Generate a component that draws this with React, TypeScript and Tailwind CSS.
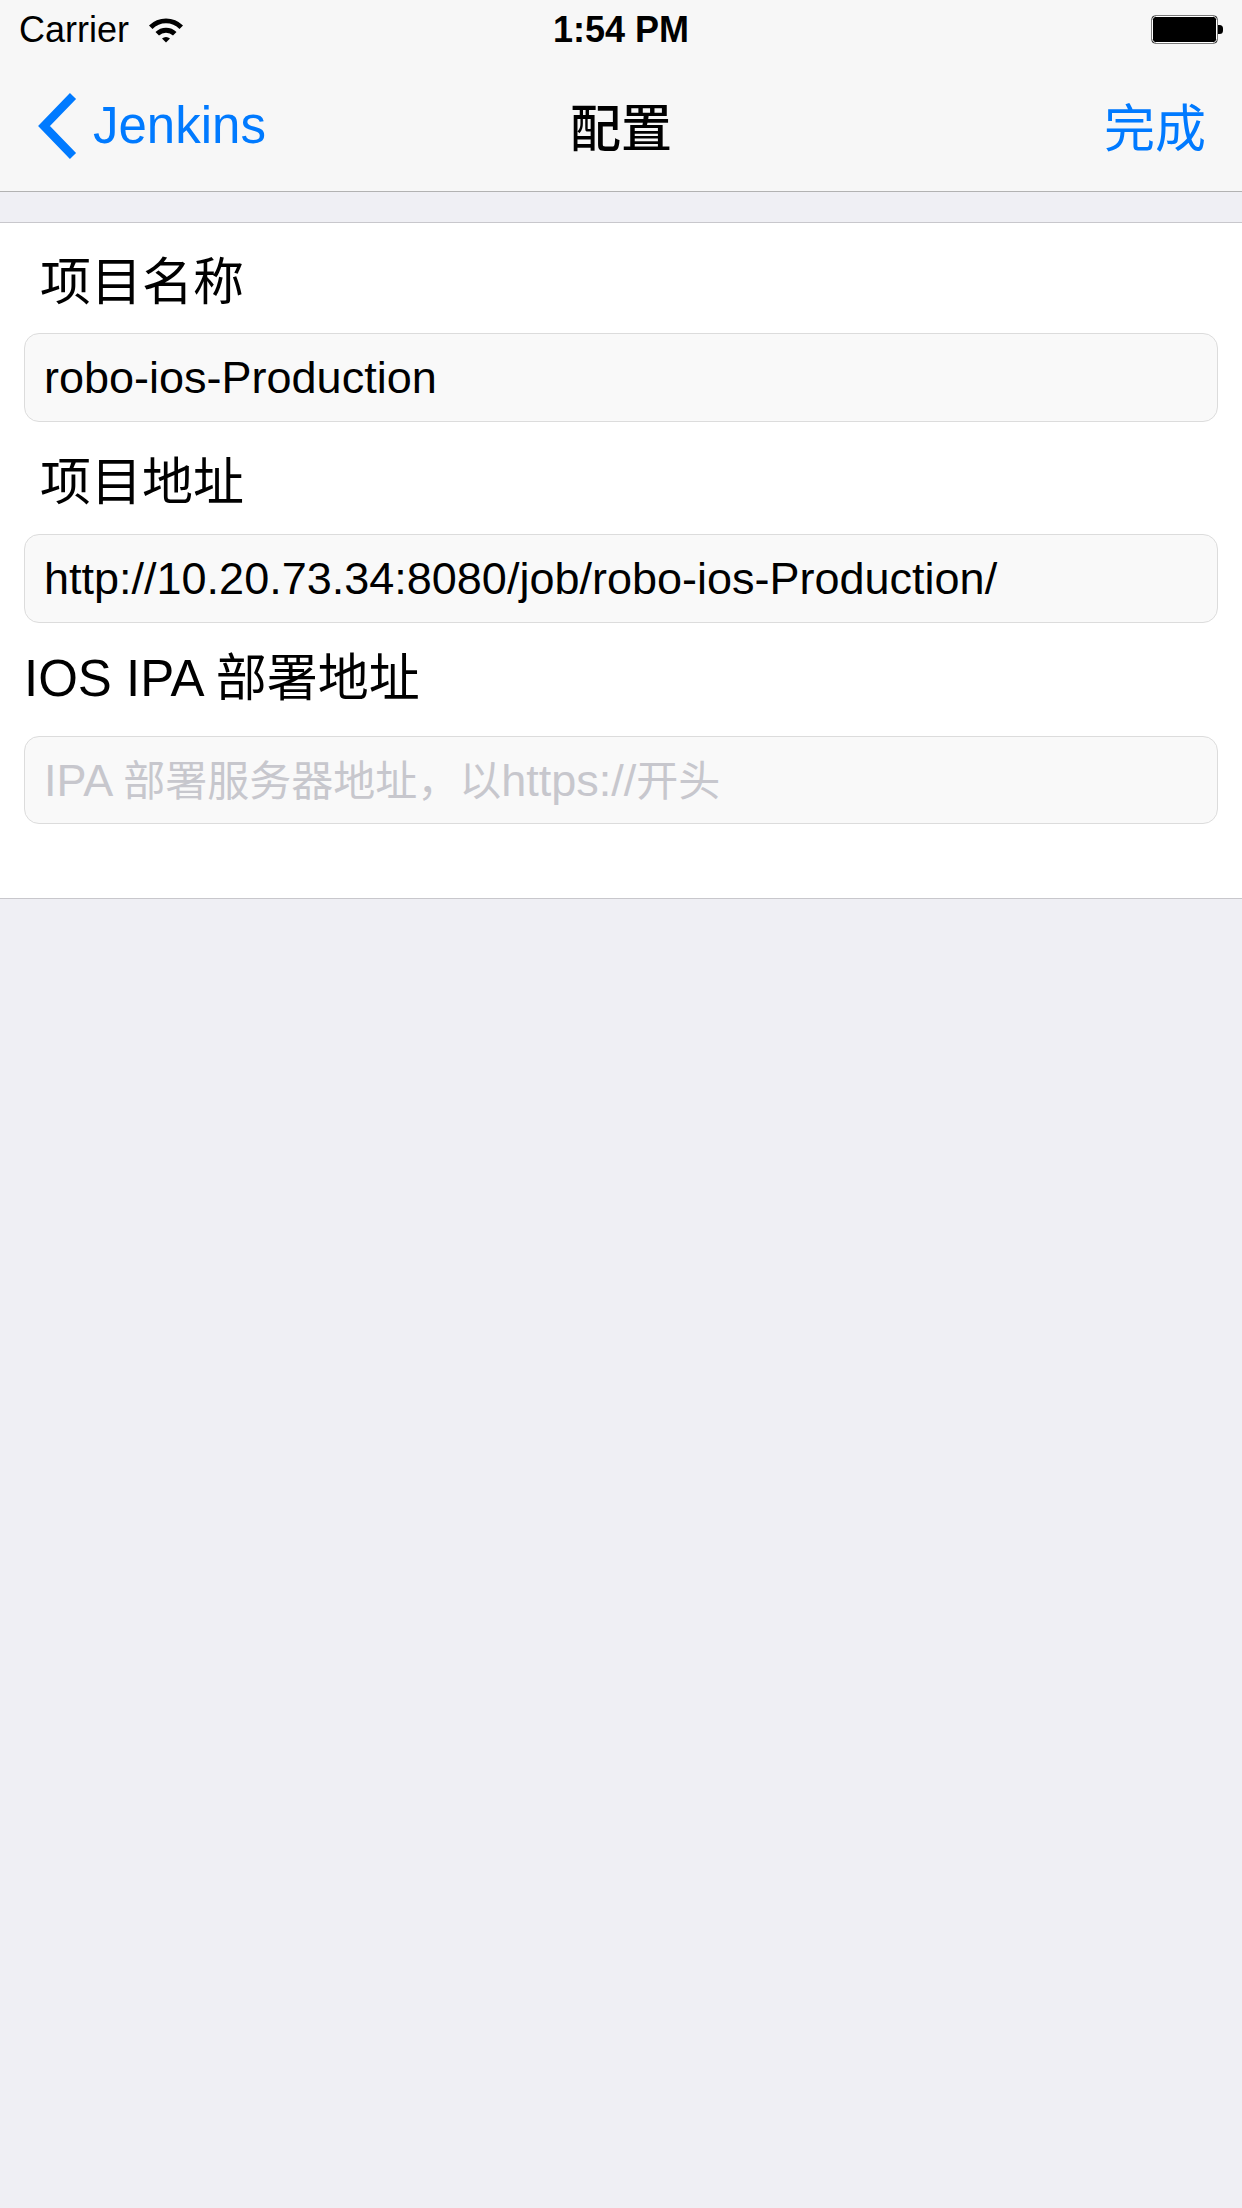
import React from 'react';

const latin = "font-['Liberation_Sans','Noto_Sans_CJK_SC',sans-serif]";

const WifiIcon = () => (
  <svg width="38" height="28" viewBox="0 0 38 28" className="ml-[18px]">
    <path d="M2 9.5 A24 24 0 0 1 36 9.5 L32.5 13 A19 19 0 0 0 5.5 13 Z" fill="#000" />
    <path d="M8.5 16 A15 15 0 0 1 29.5 16 L26 19.5 A10 10 0 0 0 12 19.5 Z" fill="#000" />
    <path d="M15 22.5 A6 6 0 0 1 23 22.5 L19 26.5 Z" fill="#000" />
  </svg>
);

const BatteryIcon = () => (
  <svg width="72" height="30" viewBox="0 0 72 30">
    <rect x="0.5" y="0.5" width="66" height="28" rx="4" fill="#000" />
    <rect x="1.5" y="1.5" width="64" height="26" rx="3" fill="none" stroke="#fff" strokeWidth="1" />
    <path d="M67 10 h1.5 a3.5 3.5 0 0 1 3.5 3.5 v2 a3.5 3.5 0 0 1 -3.5 3.5 h-1.5 Z" fill="#000" />
  </svg>
);

const Chevron = () => (
  <svg width="44" height="66" viewBox="0 0 44 66">
    <polyline points="36,3 7,33 36,63" fill="none" stroke="#007aff" strokeWidth="8.5" strokeLinejoin="miter" />
  </svg>
);

type FieldProps = { children: React.ReactNode; placeholder?: boolean; height: string };

const Field = ({ children, placeholder, height }: FieldProps) => (
  <div
    className={`mx-[24px] ${height} flex items-center rounded-[15px] border border-[#dcdcdc] bg-[#f9f9f9] pl-[19px] text-[45px] ${latin} ${
      placeholder ? 'text-[#c7c7cd]' : 'text-black'
    }`}
  >
    <span>{children}</span>
  </div>
);

const cjkSmall = "text-[42px] font-['Noto_Sans_CJK_SC',sans-serif]";

export default function App() {
  return (
    <div className="min-h-[2208px] w-[1242px] bg-[#efeff4]">
      <header className="bg-[#f7f7f7] border-b border-[#b2b2b2]">
        <div className={`h-[60px] grid grid-cols-[1fr_auto_1fr] items-center px-[19px] text-[36px] ${latin}`}>
          <div className="flex items-center">
            <span>Carrier</span>
            <WifiIcon />
          </div>
          <div className="font-semibold">1:54 PM</div>
          <div className="flex justify-end">
            <BatteryIcon />
          </div>
        </div>
        <div className="h-[131px] grid grid-cols-[1fr_auto_1fr] items-center">
          <div className={`flex items-center pl-[37px] text-[51px] text-[#007aff] ${latin}`}>
            <Chevron />
            <span className="ml-[12px] mt-[1px]">Jenkins</span>
          </div>
          <div className="text-[51px] font-medium text-black font-['Noto_Sans_CJK_SC',sans-serif]">配置</div>
          <div className="flex justify-end pr-[36px] text-[51px] text-[#007aff] font-['Noto_Sans_CJK_SC',sans-serif]">
            完成
          </div>
        </div>
      </header>

      <div className="h-[30px]" />

      <section className="bg-white border-t border-b border-[#c8c7cc] pb-[74px]">
        <div className="h-[110px] flex items-center pl-[40px] text-[51px] text-black font-['Noto_Sans_CJK_SC',sans-serif]">
          项目名称
        </div>
        <Field height="h-[89px]">robo-ios-Production</Field>
        <div className="h-[112px] flex items-center pl-[40px] text-[51px] text-black font-['Noto_Sans_CJK_SC',sans-serif]">
          项目地址
        </div>
        <Field height="h-[89px]">http://10.20.73.34:8080/job/robo-ios-Production/</Field>
        <div className={`h-[113px] flex items-center pl-[24px] text-[51px] text-black ${latin}`}>
          IOS IPA 部署地址
        </div>
        <Field placeholder height="h-[88px]">
          IPA <span className={cjkSmall}>部署服务器地址，以</span>https://<span className={cjkSmall}>开头</span>
        </Field>
      </section>
    </div>
  );
}
